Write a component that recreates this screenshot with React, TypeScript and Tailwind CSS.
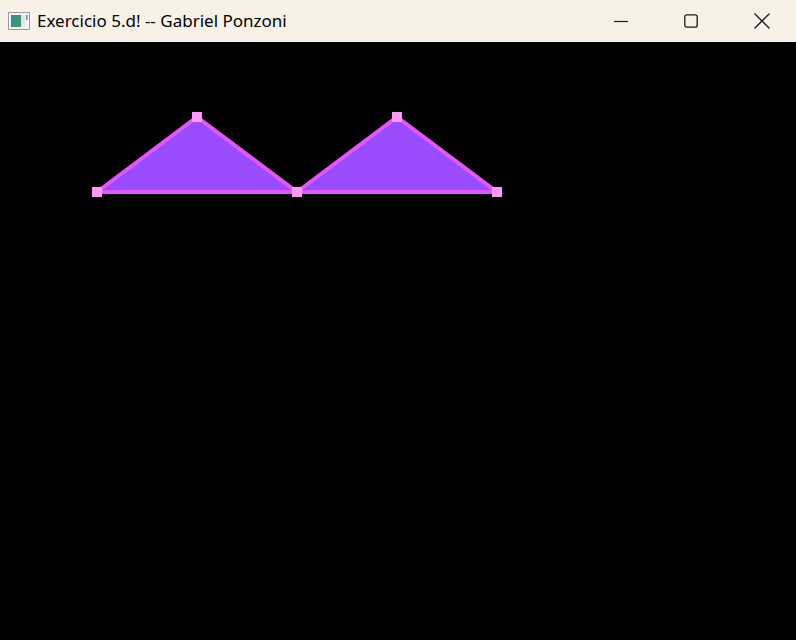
const tris = [
  [[97, 192], [197, 117], [297, 192]],
  [[297, 192], [397, 117], [497, 192]]
]

function AppIcon() {
  return (
    <svg width="22" height="18" viewBox="0 0 22 18">
      <rect x="0.5" y="0.5" width="21" height="17" fill="#f4f4f4" stroke="#9a9a9a" />
      <defs>
        <linearGradient id="g" x1="0" y1="0" x2="1" y2="1">
          <stop offset="0" stopColor="#3a8a9a" />
          <stop offset="1" stopColor="#3f9f5a" />
        </linearGradient>
      </defs>
      <rect x="3" y="3" width="10" height="12" fill="url(#g)" />
      <rect x="13" y="3" width="4" height="12" fill="#dfe6ea" />
      <rect x="18" y="3" width="1.5" height="5" fill="#6b8fa5" />
    </svg>
  )
}

export default function App() {
  return (
    <div className="flex h-[640px] w-[796px] flex-col bg-black" style={{ fontFamily: '"Noto Sans", sans-serif' }}>
      <div className="flex h-[42px] shrink-0 items-center bg-[#f8f1e7]">
        <div className="ml-[8px] flex items-center">
          <AppIcon />
        </div>
        <span className="ml-[7px] text-[17px] text-black">Exercicio 5.d! -- Gabriel Ponzoni</span>
        <div className="ml-auto flex h-full items-center">
          <div className="flex h-full w-[70px] items-center justify-center">
            <svg width="16" height="16" viewBox="0 0 16 16">
              <path d="M1 8.5h14" stroke="#1a1a1a" strokeWidth="1.2" />
            </svg>
          </div>
          <div className="flex h-full w-[70px] items-center justify-center">
            <svg width="16" height="16" viewBox="0 0 16 16">
              <rect x="1.8" y="1.8" width="12.4" height="12.4" rx="2" fill="none" stroke="#1a1a1a" strokeWidth="1.3" />
            </svg>
          </div>
          <div className="flex h-full w-[70px] items-center justify-center pl-[2px]">
            <svg width="18" height="18" viewBox="0 0 18 18">
              <path d="M1.5 1.5l15 15M16.5 1.5l-15 15" stroke="#1a1a1a" strokeWidth="1.3" />
            </svg>
          </div>
        </div>
      </div>
      <div className="relative flex-1">
        <svg width="796" height="598" viewBox="0 42 796 598" className="block">
          {tris.map((t, i) => (
            <polygon
              key={i}
              points={t.map(p => p.join(',')).join(' ')}
              fill="#9a4cfc"
              stroke="#e257f6"
              strokeWidth="4"
              strokeLinejoin="miter"
            />
          ))}
          {tris.flat().map((p, i) => (
            <rect key={i} x={p[0] - 5} y={p[1] - 5} width="10" height="10" fill="#ff99f6" />
          ))}
        </svg>
      </div>
    </div>
  )
}
